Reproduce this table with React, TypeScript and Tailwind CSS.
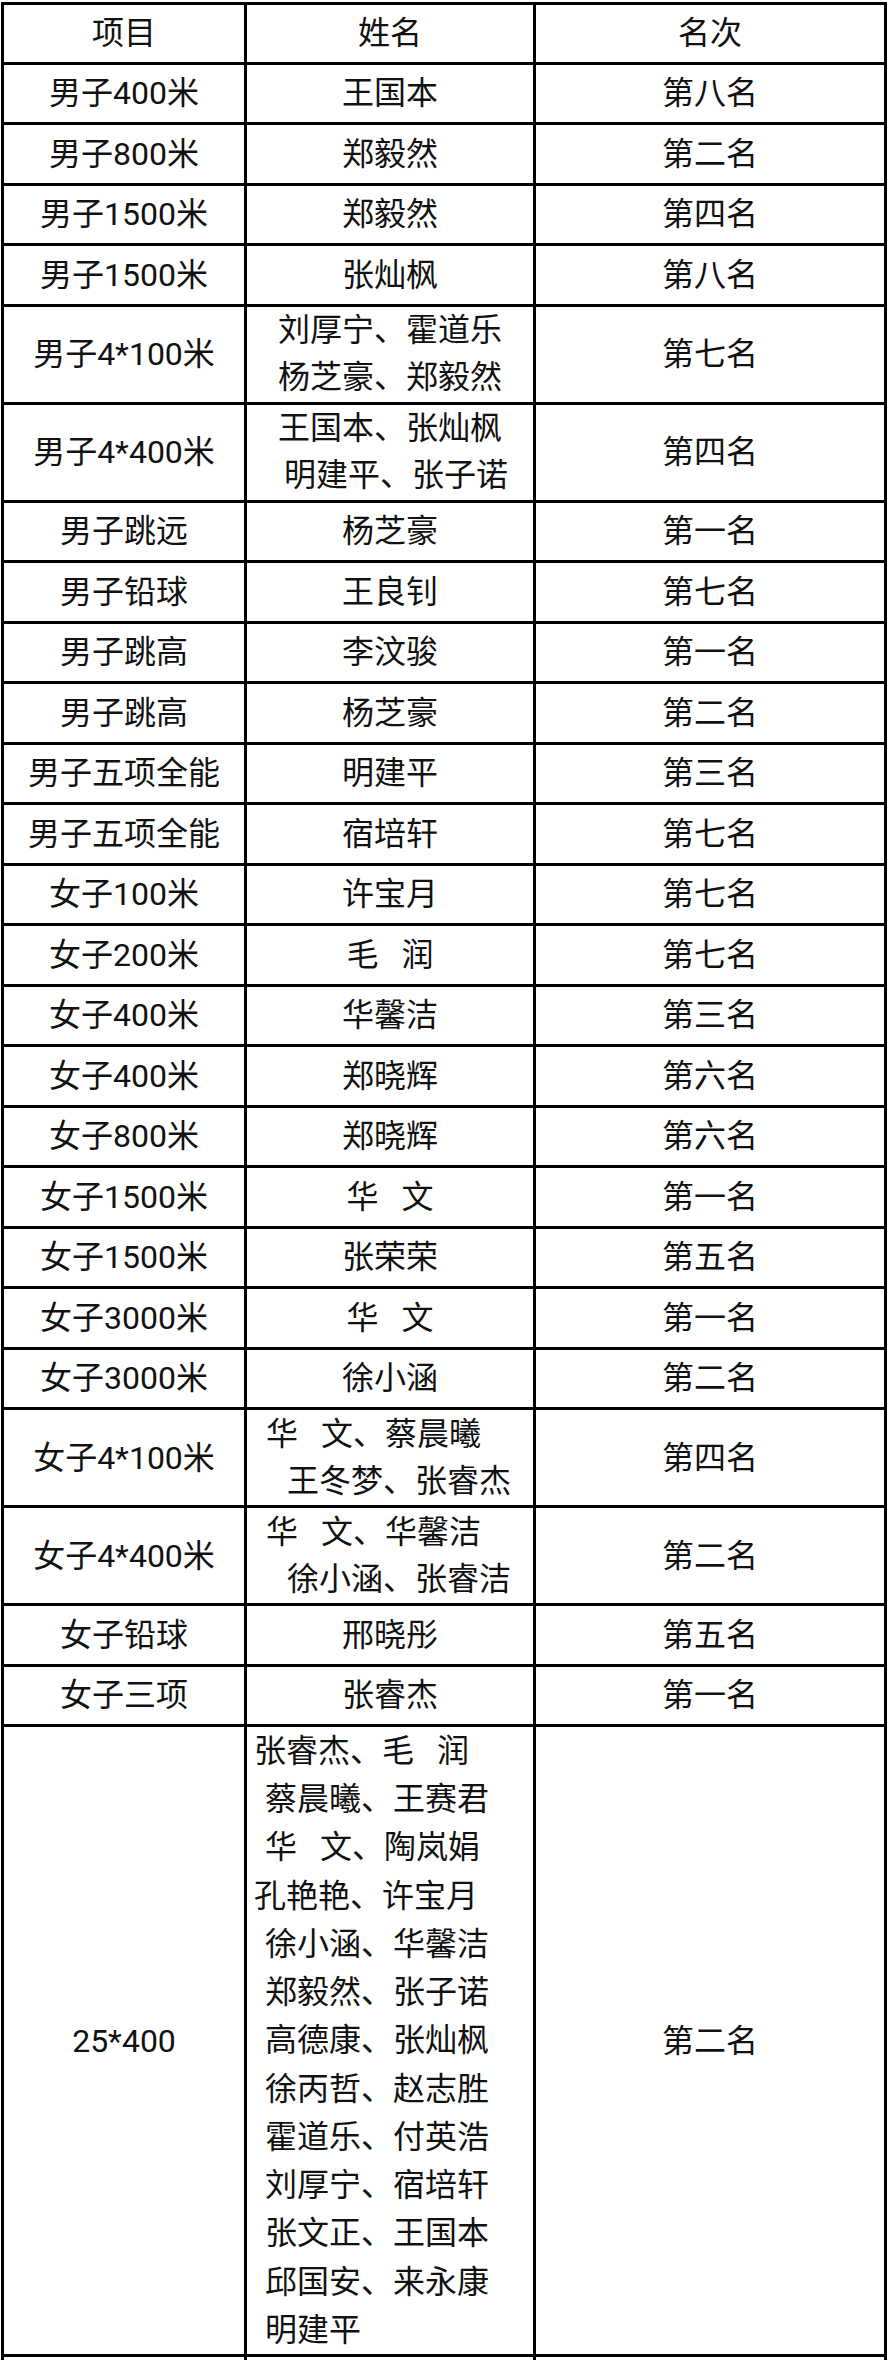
import React from 'react';

type Line = { t: string; c?: string };
type Row = {
  event: string;
  names: Line[];
  rank: string;
  h: string;
  lead?: string;
  align?: string;
};

// heights include the 3px bottom rule (border-box)
const S = 'h-[60.5px]';
const D = 'h-[98px]';

const rows: Row[] = [
  { event: '男子400米', names: [{ t: '王国本' }], rank: '第八名', h: S },
  { event: '男子800米', names: [{ t: '郑毅然' }], rank: '第二名', h: S },
  { event: '男子1500米', names: [{ t: '郑毅然' }], rank: '第四名', h: S },
  { event: '男子1500米', names: [{ t: '张灿枫' }], rank: '第八名', h: S },
  {
    event: '男子4*100米',
    names: [{ t: '刘厚宁、霍道乐' }, { t: '杨芝豪、郑毅然' }],
    rank: '第七名',
    h: D,
    lead: 'leading-[47px]',
  },
  {
    event: '男子4*400米',
    names: [{ t: '王国本、张灿枫' }, { t: '明建平、张子诺', c: 'pl-[12px]' }],
    rank: '第四名',
    h: D,
    lead: 'leading-[47px]',
  },
  { event: '男子跳远', names: [{ t: '杨芝豪' }], rank: '第一名', h: S },
  { event: '男子铅球', names: [{ t: '王良钊' }], rank: '第七名', h: S },
  { event: '男子跳高', names: [{ t: '李汶骏' }], rank: '第一名', h: S },
  { event: '男子跳高', names: [{ t: '杨芝豪' }], rank: '第二名', h: S },
  { event: '男子五项全能', names: [{ t: '明建平' }], rank: '第三名', h: S },
  { event: '男子五项全能', names: [{ t: '宿培轩' }], rank: '第七名', h: S },
  { event: '女子100米', names: [{ t: '许宝月' }], rank: '第七名', h: S },
  { event: '女子200米', names: [{ t: '毛 润' }], rank: '第七名', h: S },
  { event: '女子400米', names: [{ t: '华馨洁' }], rank: '第三名', h: S },
  { event: '女子400米', names: [{ t: '郑晓辉' }], rank: '第六名', h: S },
  { event: '女子800米', names: [{ t: '郑晓辉' }], rank: '第六名', h: S },
  { event: '女子1500米', names: [{ t: '华 文' }], rank: '第一名', h: S },
  { event: '女子1500米', names: [{ t: '张荣荣' }], rank: '第五名', h: S },
  { event: '女子3000米', names: [{ t: '华 文' }], rank: '第一名', h: S },
  { event: '女子3000米', names: [{ t: '徐小涵' }], rank: '第二名', h: S },
  {
    event: '女子4*100米',
    names: [
      { t: '华 文、蔡晨曦', c: 'pl-[19px]' },
      { t: '王冬梦、张睿杰', c: 'pl-[40px]' },
    ],
    rank: '第四名',
    h: D,
    lead: 'leading-[47px]',
    align: 'text-left',
  },
  {
    event: '女子4*400米',
    names: [
      { t: '华 文、华馨洁', c: 'pl-[19px]' },
      { t: '徐小涵、张睿洁', c: 'pl-[40px]' },
    ],
    rank: '第二名',
    h: D,
    lead: 'leading-[47px]',
    align: 'text-left',
  },
  { event: '女子铅球', names: [{ t: '邢晓彤' }], rank: '第五名', h: S },
  { event: '女子三项', names: [{ t: '张睿杰' }], rank: '第一名', h: S },
  {
    event: '25*400',
    names: [
      { t: '张睿杰、毛 润', c: 'pl-[7px]' },
      { t: '蔡晨曦、王赛君', c: 'pl-[18px]' },
      { t: '华 文、陶岚娟', c: 'pl-[18px]' },
      { t: '孔艳艳、许宝月', c: 'pl-[7px]' },
      { t: '徐小涵、华馨洁', c: 'pl-[18px]' },
      { t: '郑毅然、张子诺', c: 'pl-[18px]' },
      { t: '高德康、张灿枫', c: 'pl-[18px]' },
      { t: '徐丙哲、赵志胜', c: 'pl-[18px]' },
      { t: '霍道乐、付英浩', c: 'pl-[18px]' },
      { t: '刘厚宁、宿培轩', c: 'pl-[18px]' },
      { t: '张文正、王国本', c: 'pl-[18px]' },
      { t: '邱国安、来永康', c: 'pl-[18px]' },
      { t: '明建平', c: 'pl-[18px]' },
    ],
    rank: '第二名',
    h: 'h-[630px]',
    lead: 'leading-[48.25px]',
    align: 'text-left',
  },
];

// a space in a name stands for the wide gap used in the sheet (华  文)
function Name({ text }: { text: string }) {
  const parts = text.split(' ');
  return (
    <>
      {parts.map((p, i) => (
        <React.Fragment key={i}>
          {i > 0 && <span className="inline-block w-[23px]" />}
          {p}
        </React.Fragment>
      ))}
    </>
  );
}

const cell =
  'border-r-[3px] border-b-[3px] border-black flex items-center justify-center';

export default function App() {
  return (
    <div className="w-[888px] h-[2360px] overflow-hidden bg-white pt-[2px] pl-[1px] font-['Roboto','Noto_Sans_CJK_SC',sans-serif] text-[32px] text-[#111]">
      <div className="grid grid-cols-[243px_289px_351px] w-max border-l-[3px] border-t-[3px] border-black">
        <div className={`${cell} h-[59.5px]`}>项目</div>
        <div className={`${cell} h-[59.5px]`}>姓名</div>
        <div className={`${cell} h-[59.5px]`}>名次</div>

        {rows.map((r, i) => (
          <React.Fragment key={i}>
            <div className={`${cell} ${r.h}`}>{r.event}</div>
            <div className={`${cell} ${r.h}`}>
              {r.names.length === 1 ? (
                <span className="whitespace-nowrap">
                  <Name text={r.names[0].t} />
                </span>
              ) : (
                <div className={`w-full whitespace-nowrap ${r.lead} ${r.align ?? 'text-center'}`}>
                  {r.names.map((l, j) => (
                    <div key={j} className={l.c}>
                      <Name text={l.t} />
                    </div>
                  ))}
                </div>
              )}
            </div>
            <div className={`${cell} ${r.h}`}>{r.rank}</div>
          </React.Fragment>
        ))}

        <div className={`${cell} h-[60.5px]`} />
        <div className={`${cell} h-[60.5px]`} />
        <div className={`${cell} h-[60.5px]`} />
      </div>
    </div>
  );
}
